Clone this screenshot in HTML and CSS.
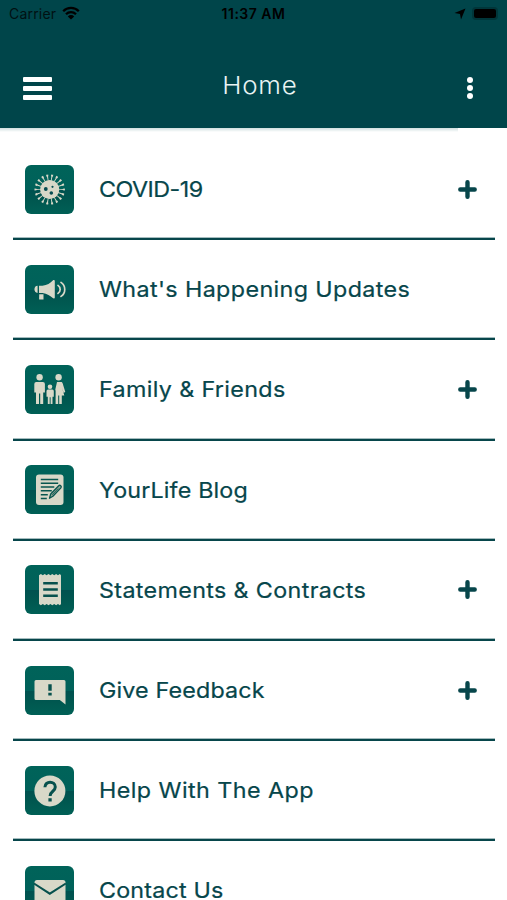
FILE: index.html
```html
<!DOCTYPE html>
<html lang="en">
<head>
  <meta charset="UTF-8" />
  <meta name="viewport" content="width=device-width, initial-scale=1" />
  <title>Home</title>
  <link rel="stylesheet" href="styles.css">
</head>
<body>

<header>
  <div class="status-bar">
    <div class="status-left">
      <span class="carrier">Carrier</span>
      <svg class="wifi" viewBox="0 0 18 14">
        <path d="M1.2 5.2a11 11 0 0 1 15.6 0M4 8.2a7 7 0 0 1 10 0" fill="none" stroke="#000" stroke-width="2.3"/>
        <path d="M9 13.6 5.8 10.4a4.6 4.6 0 0 1 6.4 0z"/>
      </svg>
    </div>
    <span class="time">11:37 AM</span>
    <div class="status-right">
      <svg class="location" viewBox="0 0 12 12"><path d="M11.5.5 7 11.5 6 6 .5 5z"/></svg>
      <span class="battery"></span>
    </div>
  </div>
  <div class="nav-bar">
    <button class="menu-btn" aria-label="Menu"><span></span><span></span><span></span></button>
    <h1>Home</h1>
    <button class="more-btn" aria-label="More"><span></span><span></span><span></span></button>
  </div>
</header>
<div class="header-shadow"></div>

<main class="list">
  <div class="item">
    <svg class="icon" viewBox="0 0 49 49">
      <!-- 18 spikes with a knob on each end -->
      <circle cx="24.7" cy="24.5" r="11.5" pathLength="180" fill="none" stroke="#d8d8c8" stroke-width="6" stroke-dasharray="2.4 7.6" stroke-dashoffset="1.2"/>
      <circle cx="24.7" cy="24.5" r="14.2" pathLength="180" fill="none" stroke="#d8d8c8" stroke-width="2" stroke-dasharray="4 6" stroke-dashoffset="2"/>
      <circle cx="24.7" cy="24.5" r="9.6" fill="#d8d8c8"/>
      <circle cx="20.800" cy="24" r="1.900" fill="#064d52"/>
      <circle cx="27.500" cy="21.800" r="1.100" fill="#064d52"/>
      <circle cx="26.300" cy="28" r="1.800" fill="#064d52"/>
    </svg>
    <span class="label label-covid">COVID-19</span>
    <svg class="plus" viewBox="0 0 19 19"><path d="M9.5 2.3v14.4M2.3 9.5h14.4"/></svg>
  </div>
  <div class="item">
    <svg class="icon" viewBox="0 0 49 49" fill="#d8d8c8">
      <path d="M14 20.8h3.5c4.5-.8 8-2.8 10.3-5.4.8-.8 2-.5 2 .7v16.3c0 1.2-1.2 1.5-2 .7-2.3-2.6-5.8-4.5-10.3-5.2H14zM12.6 20.8v7.1c-4.2 0-4.2-7.1 0-7.1zM14.2 29.3h4.3v5.3h-3.7a.7.7 0 0 1-.7-.7z"/>
      <path d="M33 20.4c2.9 2 2.9 6 0 8M36 17.4c5 3.400 5 10.600 0 14" fill="none" stroke="#d8d8c8" stroke-width="1.7" stroke-linecap="round"/>
    </svg>
    <span class="label label-updates">What's Happening Updates</span>
  </div>
  <div class="item">
    <svg class="icon" viewBox="0 0 49 49" fill="#d8d8c8">
      <circle cx="14.6" cy="12.3" r="3.2"/>
      <path d="M11.3 17h6.600a2 2 0 0 1 2 2v8.500h-1.700V39h-3v-10.500h-1.200V39h-3V27.500H9.300V19a2 2 0 0 1 2-2z"/>
      <circle cx="25" cy="21.7" r="2.3"/>
      <path d="M23 24.600h4.300a1.500 1.500 0 0 1 1.500 1.500v5.600h-1.300V39h-1.900v-6.800h-.9V39h-1.900v-7.300h-1.300v-5.600a1.500 1.500 0 0 1 1.500-1.500z"/>
      <circle cx="33.6" cy="12.3" r="3.2"/>
      <path d="M32 17h4c1 0 1.500.7 1.700 1.500l2.600 8.600-1.600.6-1.700-5 2.300 7.800h-2.500V39h-2.600v-8.500h-1V39h-2.600V26l-.3-1.500z"/>
    </svg>
    <span class="label label-family">Family &amp; Friends</span>
    <svg class="plus" viewBox="0 0 19 19"><path d="M9.5 2.3v14.4M2.3 9.5h14.4"/></svg>
  </div>
  <div class="item">
    <svg class="icon" viewBox="0 0 49 49">
      <rect x="11" y="9.5" width="27.5" height="30.5" rx="3" fill="#d8d8c8"/>
      <path d="M15.8 14.500h17.400M15.800 18.200h17.400M15.800 22h13.500M15.800 25.800h11M15.800 29.700h7M15.800 33.500h6" stroke="#07564f" stroke-width="1.4"/>
      <path d="m24.500 33.200 1.200-4.200 8-8.300c1.300-1.200 3.400.8 2.200 2.200l-8 8.300z" fill="#8fa393" stroke="#07564f" stroke-width="1.3" stroke-linejoin="round"/>
      <path d="m27.200 29.800 6-6.200" stroke="#07564f" stroke-width=".8"/>
    </svg>
    <span class="label label-blog">YourLife Blog</span>
  </div>
  <div class="item">
    <svg class="icon" viewBox="0 0 49 49">
      <path d="m14 10.300 1.900-1.300 1.900 1.300 1.900-1.300 1.900 1.300 1.900-1.300 1.900 1.300 1.900-1.300 1.900 1.300 1.900-1.300 1.900 1.300 1.900-1.300 1.100 1.300V39l-1.100 1.300-1.900-1.300-1.900 1.300-1.900-1.300-1.900 1.300-1.900-1.300-1.900 1.300-1.900-1.300-1.900 1.300-1.900-1.300-1.900 1.300L14 39z" fill="#d8d8c8"/>
      <path d="M18.200 18.200h14.600M18.200 24.500h14.600M18.200 30.700h14.600" stroke="#07514d" stroke-width="2.6"/>
    </svg>
    <span class="label label-statements">Statements &amp; Contracts</span>
    <svg class="plus" viewBox="0 0 19 19"><path d="M9.5 2.3v14.4M2.3 9.5h14.4"/></svg>
  </div>
  <div class="item">
    <svg class="icon" viewBox="0 0 49 49">
      <path d="M11 14h28a1.500 1.500 0 0 1 1.500 1.500v23L34.800 34H11a1.500 1.500 0 0 1-1.500-1.500v-17A1.500 1.500 0 0 1 11 14z" fill="#d8d8c8"/>
      <path d="M23.300 18.200h3.400v6.600h-3.400zM23.300 26.700h3.400v2.900h-3.400z" fill="#07514d"/>
    </svg>
    <span class="label label-feedback">Give Feedback</span>
    <svg class="plus" viewBox="0 0 19 19"><path d="M9.5 2.3v14.4M2.3 9.5h14.4"/></svg>
  </div>
  <div class="item">
    <svg class="icon" viewBox="0 0 49 49">
      <circle cx="24.9" cy="24.9" r="15.5" fill="#d8d8c8"/>
      <path d="M19.900 21.300c0-6.800 10.400-6.500 10.400-.2 0 4.400-5.200 4-5.200 9" fill="none" stroke="#07514d" stroke-width="3"/>
      <path d="M23.400 32.300h3.300v3.200h-3.300z" fill="#07514d"/>
    </svg>
    <span class="label label-help">Help With The App</span>
  </div>
  <div class="item">
    <svg class="icon" viewBox="0 0 49 49">
      <rect x="9.5" y="14" width="31" height="24" rx="2.5" fill="#d8d8c8"/>
      <path d="m9 17.500 15.800 10.200 16-10.200" fill="none" stroke="#07514d" stroke-width="2"/>
    </svg>
    <span class="label label-contact">Contact Us</span>
  </div>
</main>

</body>
</html>
```
FILE: styles.css
```css
* {
  box-sizing: border-box;
}
body {
  margin: 0;
  height: 900px;
  overflow: hidden;
  background: #fff;
  color: #07464b;
  font-family: 'Inter', sans-serif;
}
header {
  height: 128px;
  background: #00454a;
}
.status-bar {
  display: grid;
  grid-template-columns: 1fr auto 1fr;
  align-items: center;
  height: 27px;
  padding: 0 9px;
  color: #000;
  font-size: 14px;
}
.status-left, .status-right {
  display: flex;
  align-items: center;
}
.status-left {
  gap: 6px;
}
.carrier {
  letter-spacing: 0.2px;
  opacity: 0.75;
}
.time {
  font-size: 14px;
  font-weight: 600;
  letter-spacing: 0.5px;
}
.status-right {
  justify-content: flex-end;
  gap: 6px;
}
.wifi {
  width: 18px;
  height: 14px;
  margin-top: -2px;
}
.location {
  width: 12px;
  height: 12px;
}
.battery {
  width: 26px;
  height: 13px;
  border: 2px solid #00363a;
  border-radius: 4px;
  background: #000;
}
.nav-bar {
  display: flex;
  align-items: center;
  justify-content: space-between;
  height: 101px;
  padding: 22px 34px 0 23px;
}
.nav-bar h1 {
  margin: -7px 0 0 0;
  color: #e9f3f3;
  font-size: 24px;
  font-weight: 300;
  letter-spacing: 0.7px;
  transform: scaleX(1.08);
}
.menu-btn, .more-btn {
  display: flex;
  flex-direction: column;
  padding: 0;
  border: none;
  background: none;
}
.menu-btn {
  gap: 4px;
  width: 29px;
}
.menu-btn span {
  height: 5.3px;
  border-radius: 1px;
  background: #fff;
}
.more-btn {
  gap: 2px;
  margin-top: -2px;
}
.more-btn span {
  width: 6px;
  height: 6px;
  border-radius: 50%;
  background: #fff;
}
.header-shadow {
  width: 458px;
  height: 4px;
  margin-bottom: -4px;
  background: linear-gradient(#cfdfdf, #fff);
}
.list {
  padding: 12px 12.5px 0 13px;
}
.item {
  display: flex;
  align-items: center;
  height: 100.2px;
  padding: 0 18px 0 12px;
  border-bottom: 2px solid #07464b;
  box-shadow: inset 0 -1px #a5bcbe;
}
.icon {
  flex: none;
  width: 49px;
  height: 49px;
  border-radius: 6px;
  background: linear-gradient(#006359 0%, #00615a 50%, #00514f 52%, #005850 75%, #006056 100%);
}
.label {
  margin-left: 25px;
  font-size: 22px;
  font-weight: 400;
  line-height: 26px;
  white-space: nowrap;
  transform: scaleX(1.06);
  transform-origin: left;
  -webkit-text-stroke: 0.2px #07464b;
}
.label-covid {
  letter-spacing: -0.5px;
}
.label-updates {
  letter-spacing: 0.35px;
}
.label-family {
  letter-spacing: 0.32px;
}
.label-blog {
  letter-spacing: 0.13px;
}
.label-statements {
  letter-spacing: 0.32px;
}
.label-feedback {
  letter-spacing: 0.13px;
}
.label-help {
  letter-spacing: 0.4px;
}
.label-contact {
  letter-spacing: 0.16px;
}
.plus {
  width: 19px;
  height: 19px;
  margin-left: auto;
  fill: none;
  stroke: #07464b;
  stroke-width: 4.4;
  stroke-linecap: round;
}
```
